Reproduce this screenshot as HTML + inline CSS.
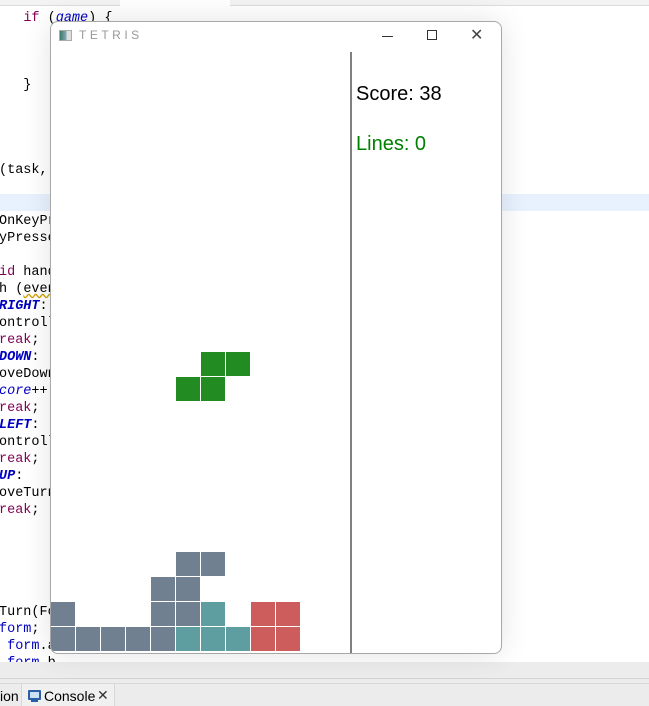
<!DOCTYPE html>
<html><head><meta charset="utf-8"><style>
*{margin:0;padding:0;box-sizing:border-box}
body{width:649px;height:706px;overflow:hidden;background:#fff;position:relative;font-family:"Liberation Sans",sans-serif}
.code{position:absolute;left:-1px;font-family:"Liberation Mono",monospace;font-size:13.5px;line-height:17px;white-space:pre;color:#000;margin-top:2px}
.k{color:#7f0055}
.b{color:#0000c0}
.bi{color:#0000c0;font-style:italic;font-weight:bold}
.i{color:#0000c0;font-style:italic}
.win{position:absolute;left:51px;top:22px;width:450px;height:631px;background:#fff;box-shadow:0 0 0 1px #a8a8a8,0 0 30px rgba(0,0,0,0.12);border-radius:7px;overflow:hidden}
.c{position:absolute;width:24px;height:24px}
.g{background:#708090}.t{background:#5f9ea0}.r{background:#cd5c5c}.gr{background:#228b22}
</style></head><body>
<div style="position:absolute;left:0;top:0;width:649px;height:6px;background:#f3f3f3;border-bottom:1px solid #dcdcdc"></div>
<div style="position:absolute;left:120px;top:0;width:110px;height:6px;background:#fff"></div>
<div style="position:absolute;left:0;top:194px;width:649px;height:17px;background:#e8f2fe"></div>
<div class="code" style="top:8px">   <span class="k">if</span> (<span class="i">game</span>) {</div>
<div class="code" style="top:75px">   }</div>
<div class="code" style="top:160px">(task,</div>
<div class="code" style="top:211px">OnKeyPr</div>
<div class="code" style="top:228px">yPresse</div>
<div class="code" style="top:262px"><span class="k">id</span> hand</div>
<div class="code" style="top:279px">h (<span style="text-decoration:underline wavy #d0a000">even</span></div>
<div class="code" style="top:296px"><span class="bi">RIGHT</span>:</div>
<div class="code" style="top:313px">ontroll</div>
<div class="code" style="top:330px"><span class="k">reak</span>;</div>
<div class="code" style="top:347px"><span class="bi">DOWN</span>:</div>
<div class="code" style="top:364px">oveDown</div>
<div class="code" style="top:381px"><span class="i">core</span>++;</div>
<div class="code" style="top:398px"><span class="k">reak</span>;</div>
<div class="code" style="top:415px"><span class="bi">LEFT</span>:</div>
<div class="code" style="top:432px">ontroll</div>
<div class="code" style="top:449px"><span class="k">reak</span>;</div>
<div class="code" style="top:466px"><span class="bi">UP</span>:</div>
<div class="code" style="top:483px">oveTurn</div>
<div class="code" style="top:500px"><span class="k">reak</span>;</div>
<div class="code" style="top:602px">Turn(Fo</div>
<div class="code" style="top:619px"><span class="b">form</span>;</div>
<div class="code" style="top:636px"> <span class="b">form</span>.a</div>
<div class="code" style="top:653px"> <span class="b">form</span>.b</div>
<div style="position:absolute;left:0;top:662px;width:649px;height:44px;background:#ececec"></div>
<div style="position:absolute;left:0;top:678px;width:649px;height:1px;background:#d4d4d4"></div>
<div style="position:absolute;left:0;top:683px;width:649px;height:1px;background:#d8d8d8"></div>
<div style="position:absolute;left:21px;top:684px;width:94px;height:22px;background:#f0f0f0;border-left:1px solid #d8d8d8;border-right:1px solid #d8d8d8"></div>
<div style="position:absolute;left:0;top:688px;font-size:14px;color:#000">ion</div>
<div style="position:absolute;left:28px;top:690px;width:13px;height:10px;border:2px solid #2a5fa8;background:#cfe0f5;border-radius:1px"></div>
<div style="position:absolute;left:31px;top:700px;width:7px;height:2px;background:#2a5fa8"></div>
<div style="position:absolute;left:44px;top:688px;font-size:14px;color:#000">Console</div>
<div style="position:absolute;left:97px;top:687px;font-size:14px;color:#333">✕</div>

<div class="win">
  <div style="position:absolute;left:8px;top:8px;width:13px;height:11px;border:1px solid #aaa;background:linear-gradient(90deg,#3a7a6a,#8ab 60%,#ddd 60%)"></div>
  <div style="position:absolute;left:28px;top:6px;font-size:12px;letter-spacing:3.5px;color:#999">TETRIS</div>
  <div style="position:absolute;left:331px;top:14px;width:11px;height:1px;background:#333"></div>
  <div style="position:absolute;left:376px;top:8px;width:10px;height:10px;border:1px solid #333"></div>
  <div style="position:absolute;left:419px;top:3px;font-size:16px;color:#444">✕</div>
  <div style="position:absolute;left:299px;top:30px;width:2px;height:601px;background:#808080"></div>
  <div style="position:absolute;left:305px;top:61px;font-size:20px;color:#000">Score: 38</div>
  <div style="position:absolute;left:305px;top:111px;font-size:20px;color:#008000">Lines: 0</div>
  <div class="c gr" style="left:150px;top:330px"></div><div class="c gr" style="left:175px;top:330px"></div>
  <div class="c gr" style="left:125px;top:355px"></div><div class="c gr" style="left:150px;top:355px"></div>
  <div class="c g" style="left:125px;top:530px"></div><div class="c g" style="left:150px;top:530px"></div>
  <div class="c g" style="left:100px;top:555px"></div><div class="c g" style="left:125px;top:555px"></div>
  <div class="c g" style="left:0px;top:580px"></div>
  <div class="c g" style="left:100px;top:580px"></div><div class="c g" style="left:125px;top:580px"></div>
  <div class="c t" style="left:150px;top:580px"></div>
  <div class="c r" style="left:200px;top:580px"></div><div class="c r" style="left:225px;top:580px"></div>
  <div class="c g" style="left:0px;top:605px"></div><div class="c g" style="left:25px;top:605px"></div>
  <div class="c g" style="left:50px;top:605px"></div><div class="c g" style="left:75px;top:605px"></div>
  <div class="c g" style="left:100px;top:605px"></div>
  <div class="c t" style="left:125px;top:605px"></div><div class="c t" style="left:150px;top:605px"></div><div class="c t" style="left:175px;top:605px"></div>
  <div class="c r" style="left:200px;top:605px"></div><div class="c r" style="left:225px;top:605px"></div>
</div>
</body></html>
